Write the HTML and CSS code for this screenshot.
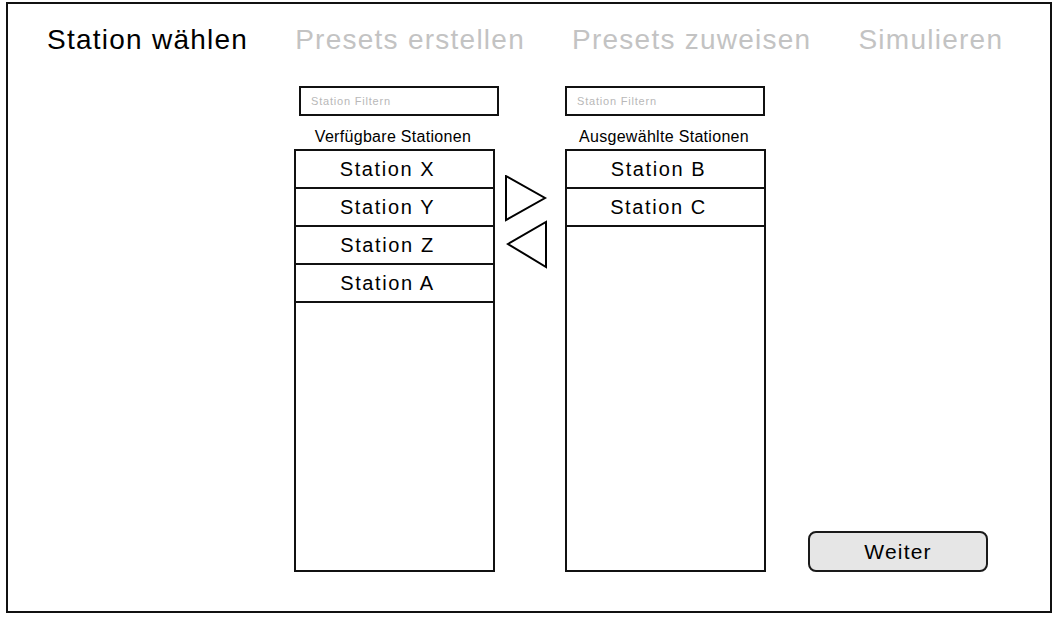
FILE: index.html
```html
<!DOCTYPE html>
<html>
  <head>
    <meta charset="utf-8" />
    <title>Station wählen</title>
    <link rel="stylesheet" href="styles.css">
  </head>
  <body>
    <div class="frame">
      <!-- Wizard steps -->
      <nav class="steps">
        <span class="step active">Station wählen</span>
        <span class="step">Presets erstellen</span>
        <span class="step">Presets zuweisen</span>
        <span class="step">Simulieren</span>
      </nav>

      <div class="main">
        <!-- Available stations -->
        <div class="column">
          <div class="filter left">Station Filtern</div>
          <div class="caption">Verfügbare Stationen</div>
          <ul class="list">
            <li>Station X</li>
            <li>Station Y</li>
            <li>Station Z</li>
            <li>Station A</li>
          </ul>
        </div>

        <!-- Move buttons -->
        <div class="arrows">
          <svg width="70" height="95" viewBox="0 0 70 95">
            <polygon points="11,1 50,23 11,45" fill="#fff" stroke="#000" stroke-width="2" />
            <polygon points="51,47 51,92 13,69" fill="#fff" stroke="#000" stroke-width="2" />
          </svg>
        </div>

        <!-- Selected stations -->
        <div class="column">
          <div class="filter">Station Filtern</div>
          <div class="caption">Ausgewählte Stationen</div>
          <ul class="list">
            <li>Station B</li>
            <li>Station C</li>
          </ul>
        </div>

        <button class="next">Weiter</button>
      </div>
    </div>
  </body>
</html>
```

FILE: styles.css
```css
* {
  box-sizing: border-box;
  margin: 0;
  padding: 0;
}

body {
  font-family: 'Liberation Sans', Arial, sans-serif;
  background-color: #ffffff;
  color: #000000;
}

/* Outer window frame */
.frame {
  margin: 2px 0 0 6px;
  width: 1046px;
  height: 611px;
  border: 2px solid #111;
  display: flex;
  flex-direction: column;
}

/* Wizard step titles */
.steps {
  display: flex;
  gap: 47px;
  padding: 19px 0 0 39px;
}

.step {
  font-size: 28px;
  line-height: 34px;
  letter-spacing: 1.25px;
  color: #c3c3c3;
}

.step.active {
  color: #000;
}

.main {
  display: flex;
  padding: 29px 0 0 286px;
}

.column {
  display: flex;
  flex-direction: column;
  width: 201px;
}

.filter {
  width: 200px;
  height: 30px;
  border: 2px solid #111;
  padding-left: 10px;
  font-size: 11px;
  line-height: 26px;
  letter-spacing: 0.8px;
  color: #b8b8b8;
}

.filter.left {
  margin-left: 5px;
}

.caption {
  margin-top: 11px;
  padding-right: 3px;
  font-size: 16px;
  line-height: 20px;
  letter-spacing: 0.3px;
  text-align: center;
}

.list {
  list-style: none;
  margin-top: 2px;
  height: 423px;
  border: 2px solid #111;
}

.list li {
  height: 38px;
  line-height: 37px;
  padding-right: 14px;
  border-bottom: 2px solid #111;
  text-align: center;
  font-size: 20px;
  letter-spacing: 1.6px;
}

.arrows {
  width: 70px;
  padding-top: 89px;
}

.arrows svg {
  display: block;
}

.next {
  align-self: flex-end;
  margin-left: 42px;
  width: 180px;
  height: 41px;
  background-color: #e6e6e6;
  border: 2px solid #1a1a1a;
  border-radius: 8px;
  font-family: 'Liberation Sans', Arial, sans-serif;
  font-size: 21px;
  line-height: 36px;
  padding-top: 1px;
  letter-spacing: 1.2px;
  color: #000;
}
```
